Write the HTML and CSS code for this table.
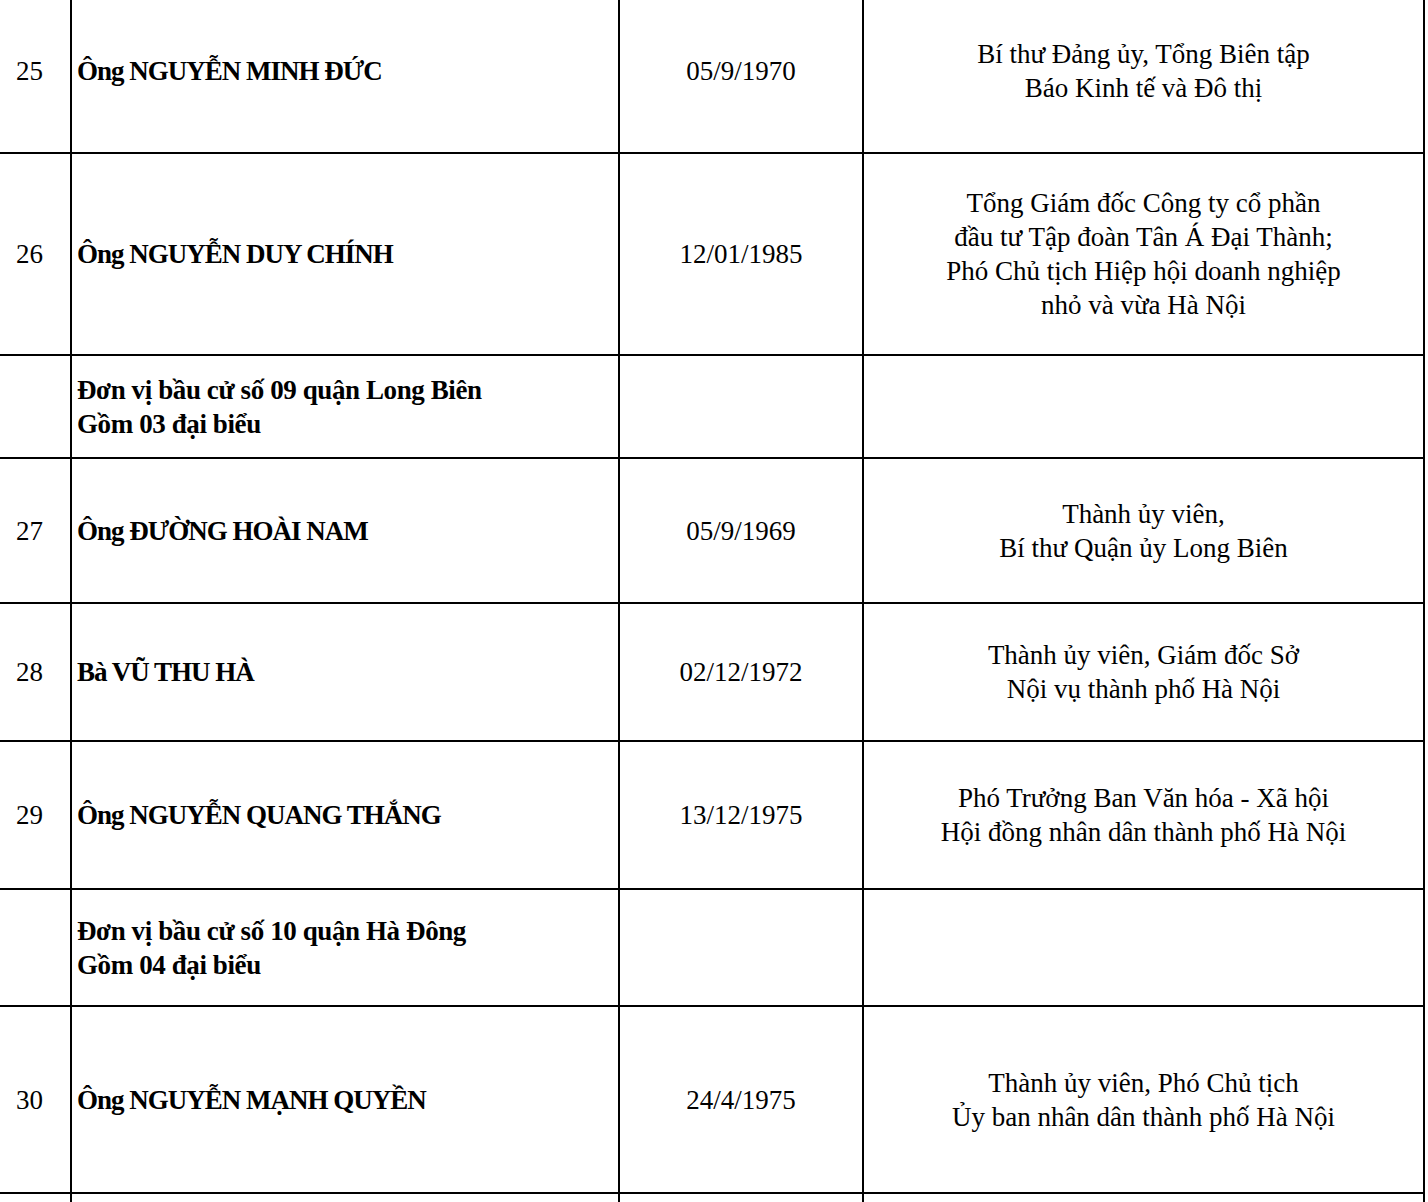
FILE: index.html
```html
<!DOCTYPE html>
<html lang="vi">
<head>
<meta charset="utf-8">
<title>Danh sách</title>
<link rel="stylesheet" href="styles.css">
</head>
<body>
<table class="list">
  <colgroup>
    <col class="c-num">
    <col class="c-name">
    <col class="c-date">
    <col class="c-pos">
  </colgroup>
  <tbody>
    <tr class="r1">
      <td class="num">25</td>
      <td class="name">Ông NGUYỄN MINH ĐỨC</td>
      <td class="date">05/9/1970</td>
      <td class="pos">Bí thư Đảng ủy, Tổng Biên tập<br>Báo Kinh tế và Đô thị</td>
    </tr>
    <tr class="r2">
      <td class="num">26</td>
      <td class="name">Ông NGUYỄN DUY CHÍNH</td>
      <td class="date">12/01/1985</td>
      <td class="pos">Tổng Giám đốc Công ty cổ phần<br>đầu tư Tập đoàn Tân Á Đại Thành;<br>Phó Chủ tịch Hiệp hội doanh nghiệp<br>nhỏ và vừa Hà Nội</td>
    </tr>
    <tr class="r3">
      <td class="num"></td>
      <td class="name section">Đơn vị bầu cử số 09 quận Long Biên<br>Gồm 03 đại biểu</td>
      <td class="date"></td>
      <td class="pos"></td>
    </tr>
    <tr class="r4">
      <td class="num">27</td>
      <td class="name">Ông ĐƯỜNG HOÀI NAM</td>
      <td class="date">05/9/1969</td>
      <td class="pos">Thành ủy viên,<br>Bí thư Quận ủy Long Biên</td>
    </tr>
    <tr class="r5">
      <td class="num">28</td>
      <td class="name">Bà VŨ THU HÀ</td>
      <td class="date">02/12/1972</td>
      <td class="pos">Thành ủy viên, Giám đốc Sở<br>Nội vụ thành phố Hà Nội</td>
    </tr>
    <tr class="r6">
      <td class="num">29</td>
      <td class="name">Ông NGUYỄN QUANG THẮNG</td>
      <td class="date">13/12/1975</td>
      <td class="pos">Phó Trưởng Ban Văn hóa - Xã hội<br>Hội đồng nhân dân thành phố Hà Nội</td>
    </tr>
    <tr class="r7">
      <td class="num"></td>
      <td class="name section">Đơn vị bầu cử số 10 quận Hà Đông<br>Gồm 04 đại biểu</td>
      <td class="date"></td>
      <td class="pos"></td>
    </tr>
    <tr class="r8">
      <td class="num">30</td>
      <td class="name">Ông NGUYỄN MẠNH QUYỀN</td>
      <td class="date">24/4/1975</td>
      <td class="pos">Thành ủy viên, Phó Chủ tịch<br>Ủy ban nhân dân thành phố Hà Nội</td>
    </tr>
    <tr class="r9">
      <td class="num"></td>
      <td class="name"></td>
      <td class="date"></td>
      <td class="pos"></td>
    </tr>
  </tbody>
</table>
</body>
</html>
```
FILE: styles.css
```css
html, body {
  margin: 0;
  padding: 0;
  background: #fff;
}

body {
  overflow: hidden;
  height: 1202px;
}

.list {
  border-collapse: collapse;
  table-layout: fixed;
  width: 1424px;
  margin-top: -10px;
  font-family: "Liberation Serif", "Times New Roman", serif;
  font-size: 27px;
  line-height: 34px;
  color: #000;
}

.c-num { width: 71px; }
.c-name { width: 548px; }
.c-date { width: 244px; }
.c-pos { width: 561px; }

.list td {
  border: 2px solid #000;
  padding: 0;
  vertical-align: middle;
}

.list td.num {
  border-left: none;
  padding-left: 16px;
  text-align: left;
}

.list td.name {
  font-weight: bold;
  padding-left: 5px;
  text-align: left;
  letter-spacing: -1px;
}

.list td.name.section {
  letter-spacing: -0.4px;
}

.list td.date,
.list td.pos {
  text-align: center;
}

.list tr:first-child td {
  border-top: none;
}

.r1 td { height: 162px; }
.r2 td { height: 200px; }
.r3 td { height: 101px; }
.r4 td { height: 143px; }
.r5 td { height: 136px; }
.r6 td { height: 146px; }
.r7 td { height: 115px; }
.r8 td { height: 185px; }
.r9 td { height: 60px; }
```
